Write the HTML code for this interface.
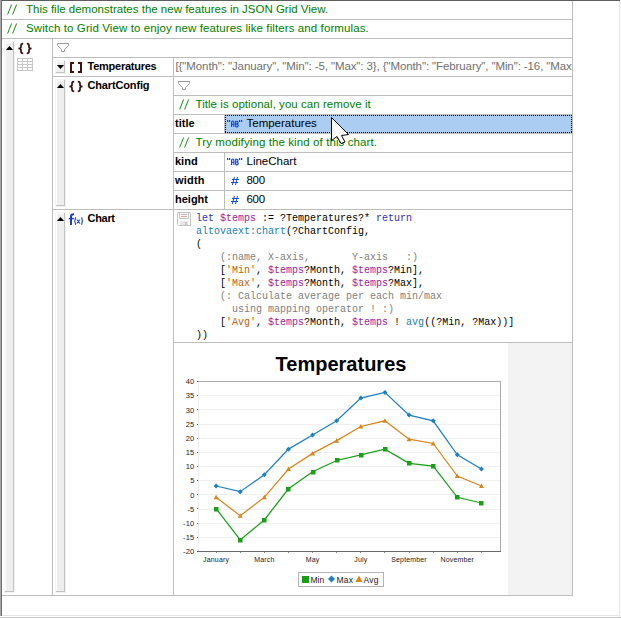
<!DOCTYPE html><html><head><meta charset="utf-8"><style>html,body{margin:0;padding:0;width:621px;height:618px;overflow:hidden;background:#fff;position:relative}text{white-space:pre}</style></head><body><svg width="621" height="618" viewBox="0 0 621 618" style="position:absolute;left:0;top:0">
<rect x="0" y="0" width="621" height="618" fill="#fff"/>
<rect x="0" y="0" width="620" height="1" fill="#5e5e5e"/>
<rect x="0" y="0" width="1" height="616" fill="#a6a6a6"/>
<rect x="1" y="0" width="1" height="616" fill="#6e6e6e"/>
<rect x="619" y="1" width="1" height="616" fill="#e4e4e4"/>
<rect x="2" y="615" width="617" height="1" fill="#e6e6e6"/>
<rect x="0" y="617" width="621" height="1" fill="#c6c6c6"/>
<rect x="2" y="19" width="571" height="1" fill="#bdbdbd"/>
<rect x="2" y="38" width="571" height="1" fill="#bdbdbd"/>
<rect x="572" y="1" width="1" height="595" fill="#bdbdbd"/>
<rect x="52" y="39" width="1" height="556" fill="#bdbdbd"/>
<rect x="53" y="57" width="520" height="1" fill="#bdbdbd"/>
<rect x="53" y="76" width="520" height="1" fill="#bdbdbd"/>
<rect x="173" y="58" width="1" height="537" fill="#bdbdbd"/>
<rect x="174" y="95" width="399" height="1" fill="#bdbdbd"/>
<rect x="174" y="114" width="399" height="1" fill="#bdbdbd"/>
<rect x="174" y="133" width="399" height="1" fill="#bdbdbd"/>
<rect x="174" y="152" width="399" height="1" fill="#bdbdbd"/>
<rect x="174" y="171" width="399" height="1" fill="#bdbdbd"/>
<rect x="174" y="190" width="399" height="1" fill="#bdbdbd"/>
<rect x="224" y="115" width="1" height="18" fill="#bdbdbd"/>
<rect x="224" y="153" width="1" height="56" fill="#bdbdbd"/>
<rect x="53" y="209" width="520" height="1" fill="#bdbdbd"/>
<rect x="174" y="342" width="399" height="1" fill="#bdbdbd"/>
<rect x="2" y="595" width="571" height="1" fill="#bdbdbd"/>
<line x1="7.6" y1="14.5" x2="11.6" y2="4.5" stroke="#008000" stroke-width="0.9"/>
<line x1="12.6" y1="14.5" x2="16.6" y2="4.5" stroke="#008000" stroke-width="0.9"/>
<text x="26" y="13" fill="#008000" style="font-family:'Liberation Sans';font-size:11.5px;font-weight:normal;" >This file demonstrates the new features in JSON Grid View.</text>
<line x1="7.6" y1="33.5" x2="11.6" y2="23.5" stroke="#008000" stroke-width="0.9"/>
<line x1="12.6" y1="33.5" x2="16.6" y2="23.5" stroke="#008000" stroke-width="0.9"/>
<text x="26" y="32" fill="#008000" style="font-family:'Liberation Sans';font-size:11.5px;font-weight:normal;letter-spacing:0.1px;" >Switch to Grid View to enjoy new features like filters and formulas.</text>
<rect x="4" y="41" width="11" height="552" fill="#f3f3f3"/>
<rect x="5" y="42" width="9" height="550" fill="#fdfdfd"/>
<rect x="6" y="43" width="7" height="548" fill="#eeeeee"/>
<rect x="13" y="42" width="1" height="550" fill="#c2c2c2"/>
<rect x="5" y="591" width="9" height="1" fill="#c2c2c2"/>
<path d="M5.9,50 L13.1,50 L9.5,46 Z" fill="#000"/>
<path d="M23.2,43.7 Q21,43.7 21,45.6 V47 Q21,48.5 18.4,48.5 Q21,48.5 21,50 V51.4 Q21,53.3 23.2,53.3 M26.8,43.7 Q29,43.7 29,45.6 V47 Q29,48.5 31.6,48.5 Q29,48.5 29,50 V51.4 Q29,53.3 26.8,53.3" fill="none" stroke="#3a120a" stroke-width="1.7"/>
<rect x="17.5" y="58.5" width="15" height="12" fill="none" stroke="#c8c8c8"/>
<rect x="17" y="61" width="16" height="1" fill="#c8c8c8"/>
<rect x="17" y="64" width="16" height="1" fill="#c8c8c8"/>
<rect x="17" y="67" width="16" height="1" fill="#c8c8c8"/>
<rect x="22" y="58" width="1" height="13" fill="#c8c8c8"/>
<rect x="27" y="58" width="1" height="13" fill="#c8c8c8"/>
<path d="M57.5,43.5 H68.5 V45.5 L64.5,49.5 V51.5 H61.5 V49.5 L57.5,45.5 Z" fill="none" stroke="#9a9a9a" stroke-width="1"/>
<rect x="55" y="60" width="11" height="14" fill="#f3f3f3"/>
<rect x="56" y="61" width="9" height="12" fill="#fdfdfd"/>
<rect x="57" y="62" width="7" height="10" fill="#eeeeee"/>
<rect x="64" y="61" width="1" height="12" fill="#c2c2c2"/>
<rect x="56" y="72" width="9" height="1" fill="#c2c2c2"/>
<path d="M56.9,65 L64.1,65 L60.5,69 Z" fill="#000"/>
<rect x="70" y="62" width="2" height="11" fill="#40140c"/>
<rect x="70" y="62" width="4" height="2" fill="#40140c"/>
<rect x="70" y="71" width="4" height="2" fill="#40140c"/>
<rect x="80" y="62" width="2" height="11" fill="#40140c"/>
<rect x="78" y="62" width="4" height="2" fill="#40140c"/>
<rect x="78" y="71" width="4" height="2" fill="#40140c"/>
<text x="87.5" y="70" fill="#000" style="font-family:'Liberation Sans';font-size:11px;font-weight:bold;letter-spacing:-0.25px;" >Temperatures</text>
<clipPath id="c1"><rect x="174" y="58" width="398" height="18"/></clipPath>
<text x="175.5" y="70" fill="#707070" style="font-family:'Liberation Sans';font-size:11.5px;font-weight:normal;letter-spacing:-0.1px;" clip-path="url(#c1)">[{&quot;Month&quot;: &quot;January&quot;, &quot;Min&quot;: -5, &quot;Max&quot;: 3}, {&quot;Month&quot;: &quot;February&quot;, &quot;Min&quot;: -16, &quot;Max&quot;: 1}, {&quot;Month&quot;: &quot;March&quot;</text>
<rect x="55" y="79" width="11" height="128" fill="#f3f3f3"/>
<rect x="56" y="80" width="9" height="126" fill="#fdfdfd"/>
<rect x="57" y="81" width="7" height="124" fill="#eeeeee"/>
<rect x="64" y="80" width="1" height="126" fill="#c2c2c2"/>
<rect x="56" y="205" width="9" height="1" fill="#c2c2c2"/>
<path d="M56.9,88 L64.1,88 L60.5,84 Z" fill="#000"/>
<path d="M74.2,81.7 Q72,81.7 72,83.6 V85 Q72,86.5 69.4,86.5 Q72,86.5 72,88 V89.4 Q72,91.3 74.2,91.3 M77.8,81.7 Q80,81.7 80,83.6 V85 Q80,86.5 82.6,86.5 Q80,86.5 80,88 V89.4 Q80,91.3 77.8,91.3" fill="none" stroke="#3a120a" stroke-width="1.7"/>
<text x="87.5" y="89" fill="#000" style="font-family:'Liberation Sans';font-size:11px;font-weight:bold;letter-spacing:-0.15px;" >ChartConfig</text>
<path d="M178.5,81.5 H189.5 V83.5 L185.5,87.5 V89.5 H182.5 V87.5 L178.5,83.5 Z" fill="none" stroke="#9a9a9a" stroke-width="1"/>
<line x1="179.6" y1="109.5" x2="183.6" y2="99.5" stroke="#008000" stroke-width="0.9"/>
<line x1="184.6" y1="109.5" x2="188.6" y2="99.5" stroke="#008000" stroke-width="0.9"/>
<text x="195.5" y="108" fill="#008000" style="font-family:'Liberation Sans';font-size:11.5px;font-weight:normal;letter-spacing:0.05px;" >Title is optional, you can remove it</text>
<text x="175" y="127" fill="#000" style="font-family:'Liberation Sans';font-size:11px;font-weight:bold;" >title</text>
<rect x="225" y="115" width="347" height="18" fill="#abcdf1"/>
<rect x="225" y="115" width="1" height="1" fill="#000"/>
<rect x="225" y="132" width="1" height="1" fill="#000"/>
<rect x="227" y="115" width="1" height="1" fill="#000"/>
<rect x="227" y="132" width="1" height="1" fill="#000"/>
<rect x="229" y="115" width="1" height="1" fill="#000"/>
<rect x="229" y="132" width="1" height="1" fill="#000"/>
<rect x="231" y="115" width="1" height="1" fill="#000"/>
<rect x="231" y="132" width="1" height="1" fill="#000"/>
<rect x="233" y="115" width="1" height="1" fill="#000"/>
<rect x="233" y="132" width="1" height="1" fill="#000"/>
<rect x="235" y="115" width="1" height="1" fill="#000"/>
<rect x="235" y="132" width="1" height="1" fill="#000"/>
<rect x="237" y="115" width="1" height="1" fill="#000"/>
<rect x="237" y="132" width="1" height="1" fill="#000"/>
<rect x="239" y="115" width="1" height="1" fill="#000"/>
<rect x="239" y="132" width="1" height="1" fill="#000"/>
<rect x="241" y="115" width="1" height="1" fill="#000"/>
<rect x="241" y="132" width="1" height="1" fill="#000"/>
<rect x="243" y="115" width="1" height="1" fill="#000"/>
<rect x="243" y="132" width="1" height="1" fill="#000"/>
<rect x="245" y="115" width="1" height="1" fill="#000"/>
<rect x="245" y="132" width="1" height="1" fill="#000"/>
<rect x="247" y="115" width="1" height="1" fill="#000"/>
<rect x="247" y="132" width="1" height="1" fill="#000"/>
<rect x="249" y="115" width="1" height="1" fill="#000"/>
<rect x="249" y="132" width="1" height="1" fill="#000"/>
<rect x="251" y="115" width="1" height="1" fill="#000"/>
<rect x="251" y="132" width="1" height="1" fill="#000"/>
<rect x="253" y="115" width="1" height="1" fill="#000"/>
<rect x="253" y="132" width="1" height="1" fill="#000"/>
<rect x="255" y="115" width="1" height="1" fill="#000"/>
<rect x="255" y="132" width="1" height="1" fill="#000"/>
<rect x="257" y="115" width="1" height="1" fill="#000"/>
<rect x="257" y="132" width="1" height="1" fill="#000"/>
<rect x="259" y="115" width="1" height="1" fill="#000"/>
<rect x="259" y="132" width="1" height="1" fill="#000"/>
<rect x="261" y="115" width="1" height="1" fill="#000"/>
<rect x="261" y="132" width="1" height="1" fill="#000"/>
<rect x="263" y="115" width="1" height="1" fill="#000"/>
<rect x="263" y="132" width="1" height="1" fill="#000"/>
<rect x="265" y="115" width="1" height="1" fill="#000"/>
<rect x="265" y="132" width="1" height="1" fill="#000"/>
<rect x="267" y="115" width="1" height="1" fill="#000"/>
<rect x="267" y="132" width="1" height="1" fill="#000"/>
<rect x="269" y="115" width="1" height="1" fill="#000"/>
<rect x="269" y="132" width="1" height="1" fill="#000"/>
<rect x="271" y="115" width="1" height="1" fill="#000"/>
<rect x="271" y="132" width="1" height="1" fill="#000"/>
<rect x="273" y="115" width="1" height="1" fill="#000"/>
<rect x="273" y="132" width="1" height="1" fill="#000"/>
<rect x="275" y="115" width="1" height="1" fill="#000"/>
<rect x="275" y="132" width="1" height="1" fill="#000"/>
<rect x="277" y="115" width="1" height="1" fill="#000"/>
<rect x="277" y="132" width="1" height="1" fill="#000"/>
<rect x="279" y="115" width="1" height="1" fill="#000"/>
<rect x="279" y="132" width="1" height="1" fill="#000"/>
<rect x="281" y="115" width="1" height="1" fill="#000"/>
<rect x="281" y="132" width="1" height="1" fill="#000"/>
<rect x="283" y="115" width="1" height="1" fill="#000"/>
<rect x="283" y="132" width="1" height="1" fill="#000"/>
<rect x="285" y="115" width="1" height="1" fill="#000"/>
<rect x="285" y="132" width="1" height="1" fill="#000"/>
<rect x="287" y="115" width="1" height="1" fill="#000"/>
<rect x="287" y="132" width="1" height="1" fill="#000"/>
<rect x="289" y="115" width="1" height="1" fill="#000"/>
<rect x="289" y="132" width="1" height="1" fill="#000"/>
<rect x="291" y="115" width="1" height="1" fill="#000"/>
<rect x="291" y="132" width="1" height="1" fill="#000"/>
<rect x="293" y="115" width="1" height="1" fill="#000"/>
<rect x="293" y="132" width="1" height="1" fill="#000"/>
<rect x="295" y="115" width="1" height="1" fill="#000"/>
<rect x="295" y="132" width="1" height="1" fill="#000"/>
<rect x="297" y="115" width="1" height="1" fill="#000"/>
<rect x="297" y="132" width="1" height="1" fill="#000"/>
<rect x="299" y="115" width="1" height="1" fill="#000"/>
<rect x="299" y="132" width="1" height="1" fill="#000"/>
<rect x="301" y="115" width="1" height="1" fill="#000"/>
<rect x="301" y="132" width="1" height="1" fill="#000"/>
<rect x="303" y="115" width="1" height="1" fill="#000"/>
<rect x="303" y="132" width="1" height="1" fill="#000"/>
<rect x="305" y="115" width="1" height="1" fill="#000"/>
<rect x="305" y="132" width="1" height="1" fill="#000"/>
<rect x="307" y="115" width="1" height="1" fill="#000"/>
<rect x="307" y="132" width="1" height="1" fill="#000"/>
<rect x="309" y="115" width="1" height="1" fill="#000"/>
<rect x="309" y="132" width="1" height="1" fill="#000"/>
<rect x="311" y="115" width="1" height="1" fill="#000"/>
<rect x="311" y="132" width="1" height="1" fill="#000"/>
<rect x="313" y="115" width="1" height="1" fill="#000"/>
<rect x="313" y="132" width="1" height="1" fill="#000"/>
<rect x="315" y="115" width="1" height="1" fill="#000"/>
<rect x="315" y="132" width="1" height="1" fill="#000"/>
<rect x="317" y="115" width="1" height="1" fill="#000"/>
<rect x="317" y="132" width="1" height="1" fill="#000"/>
<rect x="319" y="115" width="1" height="1" fill="#000"/>
<rect x="319" y="132" width="1" height="1" fill="#000"/>
<rect x="321" y="115" width="1" height="1" fill="#000"/>
<rect x="321" y="132" width="1" height="1" fill="#000"/>
<rect x="323" y="115" width="1" height="1" fill="#000"/>
<rect x="323" y="132" width="1" height="1" fill="#000"/>
<rect x="325" y="115" width="1" height="1" fill="#000"/>
<rect x="325" y="132" width="1" height="1" fill="#000"/>
<rect x="327" y="115" width="1" height="1" fill="#000"/>
<rect x="327" y="132" width="1" height="1" fill="#000"/>
<rect x="329" y="115" width="1" height="1" fill="#000"/>
<rect x="329" y="132" width="1" height="1" fill="#000"/>
<rect x="331" y="115" width="1" height="1" fill="#000"/>
<rect x="331" y="132" width="1" height="1" fill="#000"/>
<rect x="333" y="115" width="1" height="1" fill="#000"/>
<rect x="333" y="132" width="1" height="1" fill="#000"/>
<rect x="335" y="115" width="1" height="1" fill="#000"/>
<rect x="335" y="132" width="1" height="1" fill="#000"/>
<rect x="337" y="115" width="1" height="1" fill="#000"/>
<rect x="337" y="132" width="1" height="1" fill="#000"/>
<rect x="339" y="115" width="1" height="1" fill="#000"/>
<rect x="339" y="132" width="1" height="1" fill="#000"/>
<rect x="341" y="115" width="1" height="1" fill="#000"/>
<rect x="341" y="132" width="1" height="1" fill="#000"/>
<rect x="343" y="115" width="1" height="1" fill="#000"/>
<rect x="343" y="132" width="1" height="1" fill="#000"/>
<rect x="345" y="115" width="1" height="1" fill="#000"/>
<rect x="345" y="132" width="1" height="1" fill="#000"/>
<rect x="347" y="115" width="1" height="1" fill="#000"/>
<rect x="347" y="132" width="1" height="1" fill="#000"/>
<rect x="349" y="115" width="1" height="1" fill="#000"/>
<rect x="349" y="132" width="1" height="1" fill="#000"/>
<rect x="351" y="115" width="1" height="1" fill="#000"/>
<rect x="351" y="132" width="1" height="1" fill="#000"/>
<rect x="353" y="115" width="1" height="1" fill="#000"/>
<rect x="353" y="132" width="1" height="1" fill="#000"/>
<rect x="355" y="115" width="1" height="1" fill="#000"/>
<rect x="355" y="132" width="1" height="1" fill="#000"/>
<rect x="357" y="115" width="1" height="1" fill="#000"/>
<rect x="357" y="132" width="1" height="1" fill="#000"/>
<rect x="359" y="115" width="1" height="1" fill="#000"/>
<rect x="359" y="132" width="1" height="1" fill="#000"/>
<rect x="361" y="115" width="1" height="1" fill="#000"/>
<rect x="361" y="132" width="1" height="1" fill="#000"/>
<rect x="363" y="115" width="1" height="1" fill="#000"/>
<rect x="363" y="132" width="1" height="1" fill="#000"/>
<rect x="365" y="115" width="1" height="1" fill="#000"/>
<rect x="365" y="132" width="1" height="1" fill="#000"/>
<rect x="367" y="115" width="1" height="1" fill="#000"/>
<rect x="367" y="132" width="1" height="1" fill="#000"/>
<rect x="369" y="115" width="1" height="1" fill="#000"/>
<rect x="369" y="132" width="1" height="1" fill="#000"/>
<rect x="371" y="115" width="1" height="1" fill="#000"/>
<rect x="371" y="132" width="1" height="1" fill="#000"/>
<rect x="373" y="115" width="1" height="1" fill="#000"/>
<rect x="373" y="132" width="1" height="1" fill="#000"/>
<rect x="375" y="115" width="1" height="1" fill="#000"/>
<rect x="375" y="132" width="1" height="1" fill="#000"/>
<rect x="377" y="115" width="1" height="1" fill="#000"/>
<rect x="377" y="132" width="1" height="1" fill="#000"/>
<rect x="379" y="115" width="1" height="1" fill="#000"/>
<rect x="379" y="132" width="1" height="1" fill="#000"/>
<rect x="381" y="115" width="1" height="1" fill="#000"/>
<rect x="381" y="132" width="1" height="1" fill="#000"/>
<rect x="383" y="115" width="1" height="1" fill="#000"/>
<rect x="383" y="132" width="1" height="1" fill="#000"/>
<rect x="385" y="115" width="1" height="1" fill="#000"/>
<rect x="385" y="132" width="1" height="1" fill="#000"/>
<rect x="387" y="115" width="1" height="1" fill="#000"/>
<rect x="387" y="132" width="1" height="1" fill="#000"/>
<rect x="389" y="115" width="1" height="1" fill="#000"/>
<rect x="389" y="132" width="1" height="1" fill="#000"/>
<rect x="391" y="115" width="1" height="1" fill="#000"/>
<rect x="391" y="132" width="1" height="1" fill="#000"/>
<rect x="393" y="115" width="1" height="1" fill="#000"/>
<rect x="393" y="132" width="1" height="1" fill="#000"/>
<rect x="395" y="115" width="1" height="1" fill="#000"/>
<rect x="395" y="132" width="1" height="1" fill="#000"/>
<rect x="397" y="115" width="1" height="1" fill="#000"/>
<rect x="397" y="132" width="1" height="1" fill="#000"/>
<rect x="399" y="115" width="1" height="1" fill="#000"/>
<rect x="399" y="132" width="1" height="1" fill="#000"/>
<rect x="401" y="115" width="1" height="1" fill="#000"/>
<rect x="401" y="132" width="1" height="1" fill="#000"/>
<rect x="403" y="115" width="1" height="1" fill="#000"/>
<rect x="403" y="132" width="1" height="1" fill="#000"/>
<rect x="405" y="115" width="1" height="1" fill="#000"/>
<rect x="405" y="132" width="1" height="1" fill="#000"/>
<rect x="407" y="115" width="1" height="1" fill="#000"/>
<rect x="407" y="132" width="1" height="1" fill="#000"/>
<rect x="409" y="115" width="1" height="1" fill="#000"/>
<rect x="409" y="132" width="1" height="1" fill="#000"/>
<rect x="411" y="115" width="1" height="1" fill="#000"/>
<rect x="411" y="132" width="1" height="1" fill="#000"/>
<rect x="413" y="115" width="1" height="1" fill="#000"/>
<rect x="413" y="132" width="1" height="1" fill="#000"/>
<rect x="415" y="115" width="1" height="1" fill="#000"/>
<rect x="415" y="132" width="1" height="1" fill="#000"/>
<rect x="417" y="115" width="1" height="1" fill="#000"/>
<rect x="417" y="132" width="1" height="1" fill="#000"/>
<rect x="419" y="115" width="1" height="1" fill="#000"/>
<rect x="419" y="132" width="1" height="1" fill="#000"/>
<rect x="421" y="115" width="1" height="1" fill="#000"/>
<rect x="421" y="132" width="1" height="1" fill="#000"/>
<rect x="423" y="115" width="1" height="1" fill="#000"/>
<rect x="423" y="132" width="1" height="1" fill="#000"/>
<rect x="425" y="115" width="1" height="1" fill="#000"/>
<rect x="425" y="132" width="1" height="1" fill="#000"/>
<rect x="427" y="115" width="1" height="1" fill="#000"/>
<rect x="427" y="132" width="1" height="1" fill="#000"/>
<rect x="429" y="115" width="1" height="1" fill="#000"/>
<rect x="429" y="132" width="1" height="1" fill="#000"/>
<rect x="431" y="115" width="1" height="1" fill="#000"/>
<rect x="431" y="132" width="1" height="1" fill="#000"/>
<rect x="433" y="115" width="1" height="1" fill="#000"/>
<rect x="433" y="132" width="1" height="1" fill="#000"/>
<rect x="435" y="115" width="1" height="1" fill="#000"/>
<rect x="435" y="132" width="1" height="1" fill="#000"/>
<rect x="437" y="115" width="1" height="1" fill="#000"/>
<rect x="437" y="132" width="1" height="1" fill="#000"/>
<rect x="439" y="115" width="1" height="1" fill="#000"/>
<rect x="439" y="132" width="1" height="1" fill="#000"/>
<rect x="441" y="115" width="1" height="1" fill="#000"/>
<rect x="441" y="132" width="1" height="1" fill="#000"/>
<rect x="443" y="115" width="1" height="1" fill="#000"/>
<rect x="443" y="132" width="1" height="1" fill="#000"/>
<rect x="445" y="115" width="1" height="1" fill="#000"/>
<rect x="445" y="132" width="1" height="1" fill="#000"/>
<rect x="447" y="115" width="1" height="1" fill="#000"/>
<rect x="447" y="132" width="1" height="1" fill="#000"/>
<rect x="449" y="115" width="1" height="1" fill="#000"/>
<rect x="449" y="132" width="1" height="1" fill="#000"/>
<rect x="451" y="115" width="1" height="1" fill="#000"/>
<rect x="451" y="132" width="1" height="1" fill="#000"/>
<rect x="453" y="115" width="1" height="1" fill="#000"/>
<rect x="453" y="132" width="1" height="1" fill="#000"/>
<rect x="455" y="115" width="1" height="1" fill="#000"/>
<rect x="455" y="132" width="1" height="1" fill="#000"/>
<rect x="457" y="115" width="1" height="1" fill="#000"/>
<rect x="457" y="132" width="1" height="1" fill="#000"/>
<rect x="459" y="115" width="1" height="1" fill="#000"/>
<rect x="459" y="132" width="1" height="1" fill="#000"/>
<rect x="461" y="115" width="1" height="1" fill="#000"/>
<rect x="461" y="132" width="1" height="1" fill="#000"/>
<rect x="463" y="115" width="1" height="1" fill="#000"/>
<rect x="463" y="132" width="1" height="1" fill="#000"/>
<rect x="465" y="115" width="1" height="1" fill="#000"/>
<rect x="465" y="132" width="1" height="1" fill="#000"/>
<rect x="467" y="115" width="1" height="1" fill="#000"/>
<rect x="467" y="132" width="1" height="1" fill="#000"/>
<rect x="469" y="115" width="1" height="1" fill="#000"/>
<rect x="469" y="132" width="1" height="1" fill="#000"/>
<rect x="471" y="115" width="1" height="1" fill="#000"/>
<rect x="471" y="132" width="1" height="1" fill="#000"/>
<rect x="473" y="115" width="1" height="1" fill="#000"/>
<rect x="473" y="132" width="1" height="1" fill="#000"/>
<rect x="475" y="115" width="1" height="1" fill="#000"/>
<rect x="475" y="132" width="1" height="1" fill="#000"/>
<rect x="477" y="115" width="1" height="1" fill="#000"/>
<rect x="477" y="132" width="1" height="1" fill="#000"/>
<rect x="479" y="115" width="1" height="1" fill="#000"/>
<rect x="479" y="132" width="1" height="1" fill="#000"/>
<rect x="481" y="115" width="1" height="1" fill="#000"/>
<rect x="481" y="132" width="1" height="1" fill="#000"/>
<rect x="483" y="115" width="1" height="1" fill="#000"/>
<rect x="483" y="132" width="1" height="1" fill="#000"/>
<rect x="485" y="115" width="1" height="1" fill="#000"/>
<rect x="485" y="132" width="1" height="1" fill="#000"/>
<rect x="487" y="115" width="1" height="1" fill="#000"/>
<rect x="487" y="132" width="1" height="1" fill="#000"/>
<rect x="489" y="115" width="1" height="1" fill="#000"/>
<rect x="489" y="132" width="1" height="1" fill="#000"/>
<rect x="491" y="115" width="1" height="1" fill="#000"/>
<rect x="491" y="132" width="1" height="1" fill="#000"/>
<rect x="493" y="115" width="1" height="1" fill="#000"/>
<rect x="493" y="132" width="1" height="1" fill="#000"/>
<rect x="495" y="115" width="1" height="1" fill="#000"/>
<rect x="495" y="132" width="1" height="1" fill="#000"/>
<rect x="497" y="115" width="1" height="1" fill="#000"/>
<rect x="497" y="132" width="1" height="1" fill="#000"/>
<rect x="499" y="115" width="1" height="1" fill="#000"/>
<rect x="499" y="132" width="1" height="1" fill="#000"/>
<rect x="501" y="115" width="1" height="1" fill="#000"/>
<rect x="501" y="132" width="1" height="1" fill="#000"/>
<rect x="503" y="115" width="1" height="1" fill="#000"/>
<rect x="503" y="132" width="1" height="1" fill="#000"/>
<rect x="505" y="115" width="1" height="1" fill="#000"/>
<rect x="505" y="132" width="1" height="1" fill="#000"/>
<rect x="507" y="115" width="1" height="1" fill="#000"/>
<rect x="507" y="132" width="1" height="1" fill="#000"/>
<rect x="509" y="115" width="1" height="1" fill="#000"/>
<rect x="509" y="132" width="1" height="1" fill="#000"/>
<rect x="511" y="115" width="1" height="1" fill="#000"/>
<rect x="511" y="132" width="1" height="1" fill="#000"/>
<rect x="513" y="115" width="1" height="1" fill="#000"/>
<rect x="513" y="132" width="1" height="1" fill="#000"/>
<rect x="515" y="115" width="1" height="1" fill="#000"/>
<rect x="515" y="132" width="1" height="1" fill="#000"/>
<rect x="517" y="115" width="1" height="1" fill="#000"/>
<rect x="517" y="132" width="1" height="1" fill="#000"/>
<rect x="519" y="115" width="1" height="1" fill="#000"/>
<rect x="519" y="132" width="1" height="1" fill="#000"/>
<rect x="521" y="115" width="1" height="1" fill="#000"/>
<rect x="521" y="132" width="1" height="1" fill="#000"/>
<rect x="523" y="115" width="1" height="1" fill="#000"/>
<rect x="523" y="132" width="1" height="1" fill="#000"/>
<rect x="525" y="115" width="1" height="1" fill="#000"/>
<rect x="525" y="132" width="1" height="1" fill="#000"/>
<rect x="527" y="115" width="1" height="1" fill="#000"/>
<rect x="527" y="132" width="1" height="1" fill="#000"/>
<rect x="529" y="115" width="1" height="1" fill="#000"/>
<rect x="529" y="132" width="1" height="1" fill="#000"/>
<rect x="531" y="115" width="1" height="1" fill="#000"/>
<rect x="531" y="132" width="1" height="1" fill="#000"/>
<rect x="533" y="115" width="1" height="1" fill="#000"/>
<rect x="533" y="132" width="1" height="1" fill="#000"/>
<rect x="535" y="115" width="1" height="1" fill="#000"/>
<rect x="535" y="132" width="1" height="1" fill="#000"/>
<rect x="537" y="115" width="1" height="1" fill="#000"/>
<rect x="537" y="132" width="1" height="1" fill="#000"/>
<rect x="539" y="115" width="1" height="1" fill="#000"/>
<rect x="539" y="132" width="1" height="1" fill="#000"/>
<rect x="541" y="115" width="1" height="1" fill="#000"/>
<rect x="541" y="132" width="1" height="1" fill="#000"/>
<rect x="543" y="115" width="1" height="1" fill="#000"/>
<rect x="543" y="132" width="1" height="1" fill="#000"/>
<rect x="545" y="115" width="1" height="1" fill="#000"/>
<rect x="545" y="132" width="1" height="1" fill="#000"/>
<rect x="547" y="115" width="1" height="1" fill="#000"/>
<rect x="547" y="132" width="1" height="1" fill="#000"/>
<rect x="549" y="115" width="1" height="1" fill="#000"/>
<rect x="549" y="132" width="1" height="1" fill="#000"/>
<rect x="551" y="115" width="1" height="1" fill="#000"/>
<rect x="551" y="132" width="1" height="1" fill="#000"/>
<rect x="553" y="115" width="1" height="1" fill="#000"/>
<rect x="553" y="132" width="1" height="1" fill="#000"/>
<rect x="555" y="115" width="1" height="1" fill="#000"/>
<rect x="555" y="132" width="1" height="1" fill="#000"/>
<rect x="557" y="115" width="1" height="1" fill="#000"/>
<rect x="557" y="132" width="1" height="1" fill="#000"/>
<rect x="559" y="115" width="1" height="1" fill="#000"/>
<rect x="559" y="132" width="1" height="1" fill="#000"/>
<rect x="561" y="115" width="1" height="1" fill="#000"/>
<rect x="561" y="132" width="1" height="1" fill="#000"/>
<rect x="563" y="115" width="1" height="1" fill="#000"/>
<rect x="563" y="132" width="1" height="1" fill="#000"/>
<rect x="565" y="115" width="1" height="1" fill="#000"/>
<rect x="565" y="132" width="1" height="1" fill="#000"/>
<rect x="567" y="115" width="1" height="1" fill="#000"/>
<rect x="567" y="132" width="1" height="1" fill="#000"/>
<rect x="569" y="115" width="1" height="1" fill="#000"/>
<rect x="569" y="132" width="1" height="1" fill="#000"/>
<rect x="571" y="115" width="1" height="1" fill="#000"/>
<rect x="571" y="132" width="1" height="1" fill="#000"/>
<rect x="225" y="115" width="1" height="1" fill="#000"/>
<rect x="571" y="115" width="1" height="1" fill="#000"/>
<rect x="225" y="117" width="1" height="1" fill="#000"/>
<rect x="571" y="117" width="1" height="1" fill="#000"/>
<rect x="225" y="119" width="1" height="1" fill="#000"/>
<rect x="571" y="119" width="1" height="1" fill="#000"/>
<rect x="225" y="121" width="1" height="1" fill="#000"/>
<rect x="571" y="121" width="1" height="1" fill="#000"/>
<rect x="225" y="123" width="1" height="1" fill="#000"/>
<rect x="571" y="123" width="1" height="1" fill="#000"/>
<rect x="225" y="125" width="1" height="1" fill="#000"/>
<rect x="571" y="125" width="1" height="1" fill="#000"/>
<rect x="225" y="127" width="1" height="1" fill="#000"/>
<rect x="571" y="127" width="1" height="1" fill="#000"/>
<rect x="225" y="129" width="1" height="1" fill="#000"/>
<rect x="571" y="129" width="1" height="1" fill="#000"/>
<rect x="225" y="131" width="1" height="1" fill="#000"/>
<rect x="571" y="131" width="1" height="1" fill="#000"/>
<rect x="227" y="120" width="1.2" height="2" fill="#0a44cc"/>
<rect x="229" y="120" width="1.2" height="2" fill="#0a44cc"/>
<rect x="239" y="120" width="1.2" height="2" fill="#0a44cc"/>
<rect x="241" y="120" width="1.2" height="2" fill="#0a44cc"/>
<path d="M231.6,127 V122.4 Q231.6,121 232.8,121 Q233.9,121 233.9,122.4 V127 M231.6,124.2 H233.9 M235.7,126.8 V121.2 H236.8 Q238,121.2 238,122.6 Q238,124 236.8,124 H235.7 M236.8,124 Q238.2,124 238.2,125.4 Q238.2,126.8 236.8,126.8 H235.7" fill="none" stroke="#0a44cc" stroke-width="1.15"/>
<text x="246.5" y="127" fill="#000" style="font-family:'Liberation Sans';font-size:11.5px;font-weight:normal;" >Temperatures</text>
<line x1="179.6" y1="147.5" x2="183.6" y2="137.5" stroke="#008000" stroke-width="0.9"/>
<line x1="184.6" y1="147.5" x2="188.6" y2="137.5" stroke="#008000" stroke-width="0.9"/>
<text x="195.5" y="146" fill="#008000" style="font-family:'Liberation Sans';font-size:11.5px;font-weight:normal;letter-spacing:0.1px;" >Try modifying the kind of this chart.</text>
<text x="175" y="165" fill="#000" style="font-family:'Liberation Sans';font-size:11px;font-weight:bold;" >kind</text>
<rect x="227" y="158" width="1.2" height="2" fill="#0a44cc"/>
<rect x="229" y="158" width="1.2" height="2" fill="#0a44cc"/>
<rect x="239" y="158" width="1.2" height="2" fill="#0a44cc"/>
<rect x="241" y="158" width="1.2" height="2" fill="#0a44cc"/>
<path d="M231.6,165 V160.4 Q231.6,159 232.8,159 Q233.9,159 233.9,160.4 V165 M231.6,162.2 H233.9 M235.7,164.8 V159.2 H236.8 Q238,159.2 238,160.6 Q238,162 236.8,162 H235.7 M236.8,162 Q238.2,162 238.2,163.4 Q238.2,164.8 236.8,164.8 H235.7" fill="none" stroke="#0a44cc" stroke-width="1.15"/>
<text x="246.5" y="165" fill="#000" style="font-family:'Liberation Sans';font-size:11.5px;font-weight:normal;" >LineChart</text>
<text x="175" y="184" fill="#000" style="font-family:'Liberation Sans';font-size:11px;font-weight:bold;letter-spacing:0.2px;" >width</text>
<path d="M234.4,177 L232.4,185 M237.5,177 L235.5,185 M232,179.5 H239 M231,182.5 H238" fill="none" stroke="#0a50d0" stroke-width="1.0"/>
<text x="246.5" y="184" fill="#000" style="font-family:'Liberation Sans';font-size:11.5px;font-weight:normal;letter-spacing:-0.3px;" >800</text>
<text x="175" y="203" fill="#000" style="font-family:'Liberation Sans';font-size:11px;font-weight:bold;" >height</text>
<path d="M234.4,196 L232.4,204 M237.5,196 L235.5,204 M232,198.5 H239 M231,201.5 H238" fill="none" stroke="#0a50d0" stroke-width="1.0"/>
<text x="246.5" y="203" fill="#000" style="font-family:'Liberation Sans';font-size:11.5px;font-weight:normal;letter-spacing:-0.3px;" >600</text>
<rect x="55" y="212" width="11" height="381" fill="#f3f3f3"/>
<rect x="56" y="213" width="9" height="379" fill="#fdfdfd"/>
<rect x="57" y="214" width="7" height="377" fill="#eeeeee"/>
<rect x="64" y="213" width="1" height="379" fill="#c2c2c2"/>
<rect x="56" y="591" width="9" height="1" fill="#c2c2c2"/>
<path d="M56.9,221 L64.1,221 L60.5,217 Z" fill="#000"/>
<path d="M71,225 V216.5 Q71,214.3 74,214.3" fill="none" stroke="#1a3cc8" stroke-width="2"/>
<path d="M68.8,218.6 H73.8" fill="none" stroke="#1a3cc8" stroke-width="1.4"/>
<path d="M75.6,217.2 Q74,221 75.6,224.8 M76.8,219.5 L80,223.5 M80,219.5 L76.8,223.5 M81.6,217.2 Q83.2,221 81.6,224.8" fill="none" stroke="#1a3cc8" stroke-width="1.1"/>
<text x="87.5" y="222" fill="#000" style="font-family:'Liberation Sans';font-size:11px;font-weight:bold;letter-spacing:-0.3px;" >Chart</text>
<path d="M177.5,212.5 H190.5 V225.5 H178.5 L177.5,224.5 Z" fill="#fff" stroke="#c2c2c2"/>
<path d="M179.5,212.5 V218.5 H188.5 V212.5" fill="none" stroke="#c2c2c2"/>
<rect x="181" y="214" width="6" height="1" fill="#d9a6a6"/>
<rect x="181" y="216" width="6" height="1" fill="#d9a6a6"/>
<rect x="180" y="221" width="8" height="4" fill="#e6e6e6"/>
<rect x="185" y="222" width="2" height="3" fill="#c8c8c8"/>
<text x="196" y="220.5" style="font-family:'Liberation Mono';font-size:10px;white-space:pre" xml:space="preserve"><tspan fill="#3030b8">let</tspan><tspan fill="#000"> </tspan><tspan fill="#a020a0">$temps</tspan><tspan fill="#000"> := ?Temperatures?* </tspan><tspan fill="#3030b8">return</tspan></text>
<text x="196" y="233.5" style="font-family:'Liberation Mono';font-size:10px;white-space:pre" xml:space="preserve"><tspan fill="#2080b0">altovaext:chart</tspan><tspan fill="#000">(?ChartConfig,</tspan></text>
<text x="196" y="246.5" style="font-family:'Liberation Mono';font-size:10px;white-space:pre" xml:space="preserve"><tspan fill="#000">(</tspan></text>
<text x="196" y="259.5" style="font-family:'Liberation Mono';font-size:10px;white-space:pre" xml:space="preserve"><tspan fill="#808080">    (:name, X-axis,       Y-axis   :)</tspan></text>
<text x="196" y="272.5" style="font-family:'Liberation Mono';font-size:10px;white-space:pre" xml:space="preserve"><tspan fill="#000">    [</tspan><tspan fill="#c06010">&#x27;Min&#x27;</tspan><tspan fill="#000">, </tspan><tspan fill="#a020a0">$temps</tspan><tspan fill="#000">?Month, </tspan><tspan fill="#a020a0">$temps</tspan><tspan fill="#000">?Min],</tspan></text>
<text x="196" y="285.5" style="font-family:'Liberation Mono';font-size:10px;white-space:pre" xml:space="preserve"><tspan fill="#000">    [</tspan><tspan fill="#c06010">&#x27;Max&#x27;</tspan><tspan fill="#000">, </tspan><tspan fill="#a020a0">$temps</tspan><tspan fill="#000">?Month, </tspan><tspan fill="#a020a0">$temps</tspan><tspan fill="#000">?Max],</tspan></text>
<text x="196" y="298.5" style="font-family:'Liberation Mono';font-size:10px;white-space:pre" xml:space="preserve"><tspan fill="#808080">    (: Calculate average per each min/max</tspan></text>
<text x="196" y="311.5" style="font-family:'Liberation Mono';font-size:10px;white-space:pre" xml:space="preserve"><tspan fill="#808080">      using mapping operator ! :)</tspan></text>
<text x="196" y="324.5" style="font-family:'Liberation Mono';font-size:10px;white-space:pre" xml:space="preserve"><tspan fill="#000">    [</tspan><tspan fill="#c06010">&#x27;Avg&#x27;</tspan><tspan fill="#000">, </tspan><tspan fill="#a020a0">$temps</tspan><tspan fill="#000">?Month, </tspan><tspan fill="#a020a0">$temps</tspan><tspan fill="#000"> ! </tspan><tspan fill="#2080b0">avg</tspan><tspan fill="#000">((?Min, ?Max))]</tspan></text>
<text x="196" y="337.5" style="font-family:'Liberation Mono';font-size:10px;white-space:pre" xml:space="preserve"><tspan fill="#000">))</tspan></text>
<rect x="508" y="343" width="64" height="252" fill="#f3f3f3"/>
<text x="341" y="370.5" fill="#000" style="font-family:'Liberation Sans';font-size:20px;font-weight:bold;" text-anchor="middle">Temperatures</text>
<rect x="199" y="395" width="301" height="1" fill="#f0f0f0"/>
<rect x="199" y="409" width="301" height="1" fill="#f0f0f0"/>
<rect x="199" y="424" width="301" height="1" fill="#f0f0f0"/>
<rect x="199" y="438" width="301" height="1" fill="#f0f0f0"/>
<rect x="199" y="452" width="301" height="1" fill="#f0f0f0"/>
<rect x="199" y="466" width="301" height="1" fill="#f0f0f0"/>
<rect x="199" y="480" width="301" height="1" fill="#f0f0f0"/>
<rect x="199" y="494" width="301" height="1" fill="#f0f0f0"/>
<rect x="199" y="509" width="301" height="1" fill="#f0f0f0"/>
<rect x="199" y="523" width="301" height="1" fill="#f0f0f0"/>
<rect x="199" y="537" width="301" height="1" fill="#f0f0f0"/>
<rect x="198" y="381" width="303" height="1" fill="#a9a9a9"/>
<rect x="500" y="381" width="1" height="171" fill="#a9a9a9"/>
<rect x="198" y="382" width="1" height="169" fill="#ececec"/>
<rect x="197" y="551" width="304" height="1" fill="#6a6a6a"/>
<text x="194.5" y="384.2" fill="#1a1a1a" style="font-family:'Liberation Sans';font-size:7.5px;font-weight:normal;letter-spacing:0.2px;" text-anchor="end">40</text>
<rect x="197" y="381" width="1" height="1" fill="#555"/>
<text x="194.5" y="398.3666666666667" fill="#1a1a1a" style="font-family:'Liberation Sans';font-size:7.5px;font-weight:normal;letter-spacing:0.2px;" text-anchor="end">35</text>
<rect x="197" y="395" width="1" height="1" fill="#555"/>
<text x="194.5" y="412.5333333333333" fill="#1a1a1a" style="font-family:'Liberation Sans';font-size:7.5px;font-weight:normal;letter-spacing:0.2px;" text-anchor="end">30</text>
<rect x="197" y="409" width="1" height="1" fill="#555"/>
<text x="194.5" y="426.7" fill="#1a1a1a" style="font-family:'Liberation Sans';font-size:7.5px;font-weight:normal;letter-spacing:0.2px;" text-anchor="end">25</text>
<rect x="197" y="424" width="1" height="1" fill="#555"/>
<text x="194.5" y="440.8666666666667" fill="#1a1a1a" style="font-family:'Liberation Sans';font-size:7.5px;font-weight:normal;letter-spacing:0.2px;" text-anchor="end">20</text>
<rect x="197" y="438" width="1" height="1" fill="#555"/>
<text x="194.5" y="455.0333333333333" fill="#1a1a1a" style="font-family:'Liberation Sans';font-size:7.5px;font-weight:normal;letter-spacing:0.2px;" text-anchor="end">15</text>
<rect x="197" y="452" width="1" height="1" fill="#555"/>
<text x="194.5" y="469.2" fill="#1a1a1a" style="font-family:'Liberation Sans';font-size:7.5px;font-weight:normal;letter-spacing:0.2px;" text-anchor="end">10</text>
<rect x="197" y="466" width="1" height="1" fill="#555"/>
<text x="194.5" y="483.3666666666667" fill="#1a1a1a" style="font-family:'Liberation Sans';font-size:7.5px;font-weight:normal;letter-spacing:0.2px;" text-anchor="end">5</text>
<rect x="197" y="480" width="1" height="1" fill="#555"/>
<text x="194.5" y="497.5333333333333" fill="#1a1a1a" style="font-family:'Liberation Sans';font-size:7.5px;font-weight:normal;letter-spacing:0.2px;" text-anchor="end">0</text>
<rect x="197" y="494" width="1" height="1" fill="#555"/>
<text x="194.5" y="511.7" fill="#1a1a1a" style="font-family:'Liberation Sans';font-size:7.5px;font-weight:normal;letter-spacing:0.2px;" text-anchor="end">-5</text>
<rect x="197" y="508" width="1" height="1" fill="#555"/>
<text x="194.5" y="525.8666666666667" fill="#1a1a1a" style="font-family:'Liberation Sans';font-size:7.5px;font-weight:normal;letter-spacing:0.2px;" text-anchor="end">-10</text>
<rect x="197" y="523" width="1" height="1" fill="#555"/>
<text x="194.5" y="540.0333333333334" fill="#1a1a1a" style="font-family:'Liberation Sans';font-size:7.5px;font-weight:normal;letter-spacing:0.2px;" text-anchor="end">-15</text>
<rect x="197" y="537" width="1" height="1" fill="#555"/>
<text x="194.5" y="554.2" fill="#1a1a1a" style="font-family:'Liberation Sans';font-size:7.5px;font-weight:normal;letter-spacing:0.2px;" text-anchor="end">-20</text>
<rect x="197" y="551" width="1" height="1" fill="#555"/>
<rect x="216" y="552" width="1" height="1" fill="#8a8a8a"/>
<rect x="240" y="552" width="1" height="1" fill="#8a8a8a"/>
<rect x="264" y="552" width="1" height="1" fill="#8a8a8a"/>
<rect x="288" y="552" width="1" height="1" fill="#8a8a8a"/>
<rect x="312" y="552" width="1" height="1" fill="#8a8a8a"/>
<rect x="336" y="552" width="1" height="1" fill="#8a8a8a"/>
<rect x="360" y="552" width="1" height="1" fill="#8a8a8a"/>
<rect x="384" y="552" width="1" height="1" fill="#8a8a8a"/>
<rect x="409" y="552" width="1" height="1" fill="#8a8a8a"/>
<rect x="433" y="552" width="1" height="1" fill="#8a8a8a"/>
<rect x="457" y="552" width="1" height="1" fill="#8a8a8a"/>
<rect x="481" y="552" width="1" height="1" fill="#8a8a8a"/>
<text x="216.1" y="561.5" fill="#1a1a1a" style="font-family:'Liberation Sans';font-size:7px;font-weight:normal;letter-spacing:0.15px;" text-anchor="middle">January</text>
<text x="264.34" y="561.5" fill="#1a1a1a" style="font-family:'Liberation Sans';font-size:7px;font-weight:normal;letter-spacing:0.15px;" text-anchor="middle">March</text>
<text x="312.58" y="561.5" fill="#1a1a1a" style="font-family:'Liberation Sans';font-size:7px;font-weight:normal;letter-spacing:0.15px;" text-anchor="middle">May</text>
<text x="360.82" y="561.5" fill="#1a1a1a" style="font-family:'Liberation Sans';font-size:7px;font-weight:normal;letter-spacing:0.15px;" text-anchor="middle">July</text>
<text x="409.06" y="561.5" fill="#1a1a1a" style="font-family:'Liberation Sans';font-size:7px;font-weight:normal;letter-spacing:0.15px;" text-anchor="middle">September</text>
<text x="457.3" y="561.5" fill="#1a1a1a" style="font-family:'Liberation Sans';font-size:7px;font-weight:normal;letter-spacing:0.15px;" text-anchor="middle">November</text>
<polyline points="216.1,486.0 240.2,491.7 264.3,474.7 288.5,449.1 312.6,435.0 336.7,420.8 360.8,398.1 384.9,392.4 409.1,415.1 433.2,420.8 457.3,454.8 481.4,469.0" fill="none" stroke="#1f80c0" stroke-width="1.25"/>
<polyline points="216.1,497.3 240.2,515.8 264.3,497.3 288.5,469.0 312.6,453.4 336.7,440.6 360.8,426.5 384.9,420.8 409.1,439.2 433.2,443.5 457.3,476.1 481.4,486.0" fill="none" stroke="#d8861c" stroke-width="1.25"/>
<polyline points="216.1,508.7 240.2,539.9 264.3,520.0 288.5,488.8 312.6,471.8 336.7,460.5 360.8,454.8 384.9,449.1 409.1,463.3 433.2,466.1 457.3,497.3 481.4,503.0" fill="none" stroke="#18a018" stroke-width="1.25"/>
<rect x="214" y="507" width="4.5" height="4.5" fill="#18a018"/>
<rect x="238" y="538" width="4.5" height="4.5" fill="#18a018"/>
<rect x="262" y="518" width="4.5" height="4.5" fill="#18a018"/>
<rect x="286" y="487" width="4.5" height="4.5" fill="#18a018"/>
<rect x="311" y="470" width="4.5" height="4.5" fill="#18a018"/>
<rect x="335" y="458" width="4.5" height="4.5" fill="#18a018"/>
<rect x="359" y="453" width="4.5" height="4.5" fill="#18a018"/>
<rect x="383" y="447" width="4.5" height="4.5" fill="#18a018"/>
<rect x="407" y="461" width="4.5" height="4.5" fill="#18a018"/>
<rect x="431" y="464" width="4.5" height="4.5" fill="#18a018"/>
<rect x="455" y="495" width="4.5" height="4.5" fill="#18a018"/>
<rect x="479" y="501" width="4.5" height="4.5" fill="#18a018"/>
<path d="M216.1,483.495 L218.6,485.995 L216.1,488.495 L213.6,485.995 Z" fill="#1f80c0"/>
<path d="M240.22,489.165 L242.72,491.665 L240.22,494.165 L237.72,491.665 Z" fill="#1f80c0"/>
<path d="M264.34,472.155 L266.84,474.655 L264.34,477.155 L261.84,474.655 Z" fill="#1f80c0"/>
<path d="M288.46,446.64 L290.96,449.14 L288.46,451.64 L285.96,449.14 Z" fill="#1f80c0"/>
<path d="M312.58,432.46500000000003 L315.08,434.96500000000003 L312.58,437.46500000000003 L310.08,434.96500000000003 Z" fill="#1f80c0"/>
<path d="M336.7,418.29 L339.2,420.79 L336.7,423.29 L334.2,420.79 Z" fill="#1f80c0"/>
<path d="M360.82,395.61 L363.32,398.11 L360.82,400.61 L358.32,398.11 Z" fill="#1f80c0"/>
<path d="M384.94,389.94 L387.44,392.44 L384.94,394.94 L382.44,392.44 Z" fill="#1f80c0"/>
<path d="M409.06,412.62 L411.56,415.12 L409.06,417.62 L406.56,415.12 Z" fill="#1f80c0"/>
<path d="M433.18,418.29 L435.68,420.79 L433.18,423.29 L430.68,420.79 Z" fill="#1f80c0"/>
<path d="M457.3,452.31 L459.8,454.81 L457.3,457.31 L454.8,454.81 Z" fill="#1f80c0"/>
<path d="M481.41999999999996,466.485 L483.91999999999996,468.985 L481.41999999999996,471.485 L478.91999999999996,468.985 Z" fill="#1f80c0"/>
<path d="M216.1,494.835 L218.6,499.335 L213.6,499.335 Z" fill="#d8861c"/>
<path d="M240.22,513.2625 L242.72,517.7625 L237.72,517.7625 Z" fill="#d8861c"/>
<path d="M264.34,494.835 L266.84,499.335 L261.84,499.335 Z" fill="#d8861c"/>
<path d="M288.46,466.485 L290.96,470.985 L285.96,470.985 Z" fill="#d8861c"/>
<path d="M312.58,450.8925 L315.08,455.3925 L310.08,455.3925 Z" fill="#d8861c"/>
<path d="M336.7,438.135 L339.2,442.635 L334.2,442.635 Z" fill="#d8861c"/>
<path d="M360.82,423.96000000000004 L363.32,428.46000000000004 L358.32,428.46000000000004 Z" fill="#d8861c"/>
<path d="M384.94,418.29 L387.44,422.79 L382.44,422.79 Z" fill="#d8861c"/>
<path d="M409.06,436.7175 L411.56,441.2175 L406.56,441.2175 Z" fill="#d8861c"/>
<path d="M433.18,440.97 L435.68,445.47 L430.68,445.47 Z" fill="#d8861c"/>
<path d="M457.3,473.5725 L459.8,478.0725 L454.8,478.0725 Z" fill="#d8861c"/>
<path d="M481.41999999999996,483.495 L483.91999999999996,487.995 L478.91999999999996,487.995 Z" fill="#d8861c"/>
<rect x="298.5" y="572.5" width="85" height="14" fill="#fff" stroke="#b4b4b4"/>
<rect x="302" y="576" width="7" height="7" fill="#18a018"/>
<text x="310.5" y="583" fill="#1a1a1a" style="font-family:'Liberation Sans';font-size:8.5px;font-weight:normal;" >Min</text>
<path d="M331.5,575.5 L335,579 L331.5,582.5 L328,579 Z" fill="#1f80c0"/>
<text x="336.5" y="583" fill="#1a1a1a" style="font-family:'Liberation Sans';font-size:8.5px;font-weight:normal;letter-spacing:0.2px;" >Max</text>
<path d="M359,575.5 L362.5,582 L355.5,582 Z" fill="#d8861c"/>
<text x="363.5" y="583" fill="#1a1a1a" style="font-family:'Liberation Sans';font-size:8.5px;font-weight:normal;letter-spacing:0.2px;" >Avg</text>
<path d="M331.5,117.5 L348.5,134.5 L341.5,135.5 L345,142 L341,143.5 L337,136.5 L331.5,140.5 Z" fill="#fff" stroke="#000" stroke-width="1"/>
</svg></body></html>
